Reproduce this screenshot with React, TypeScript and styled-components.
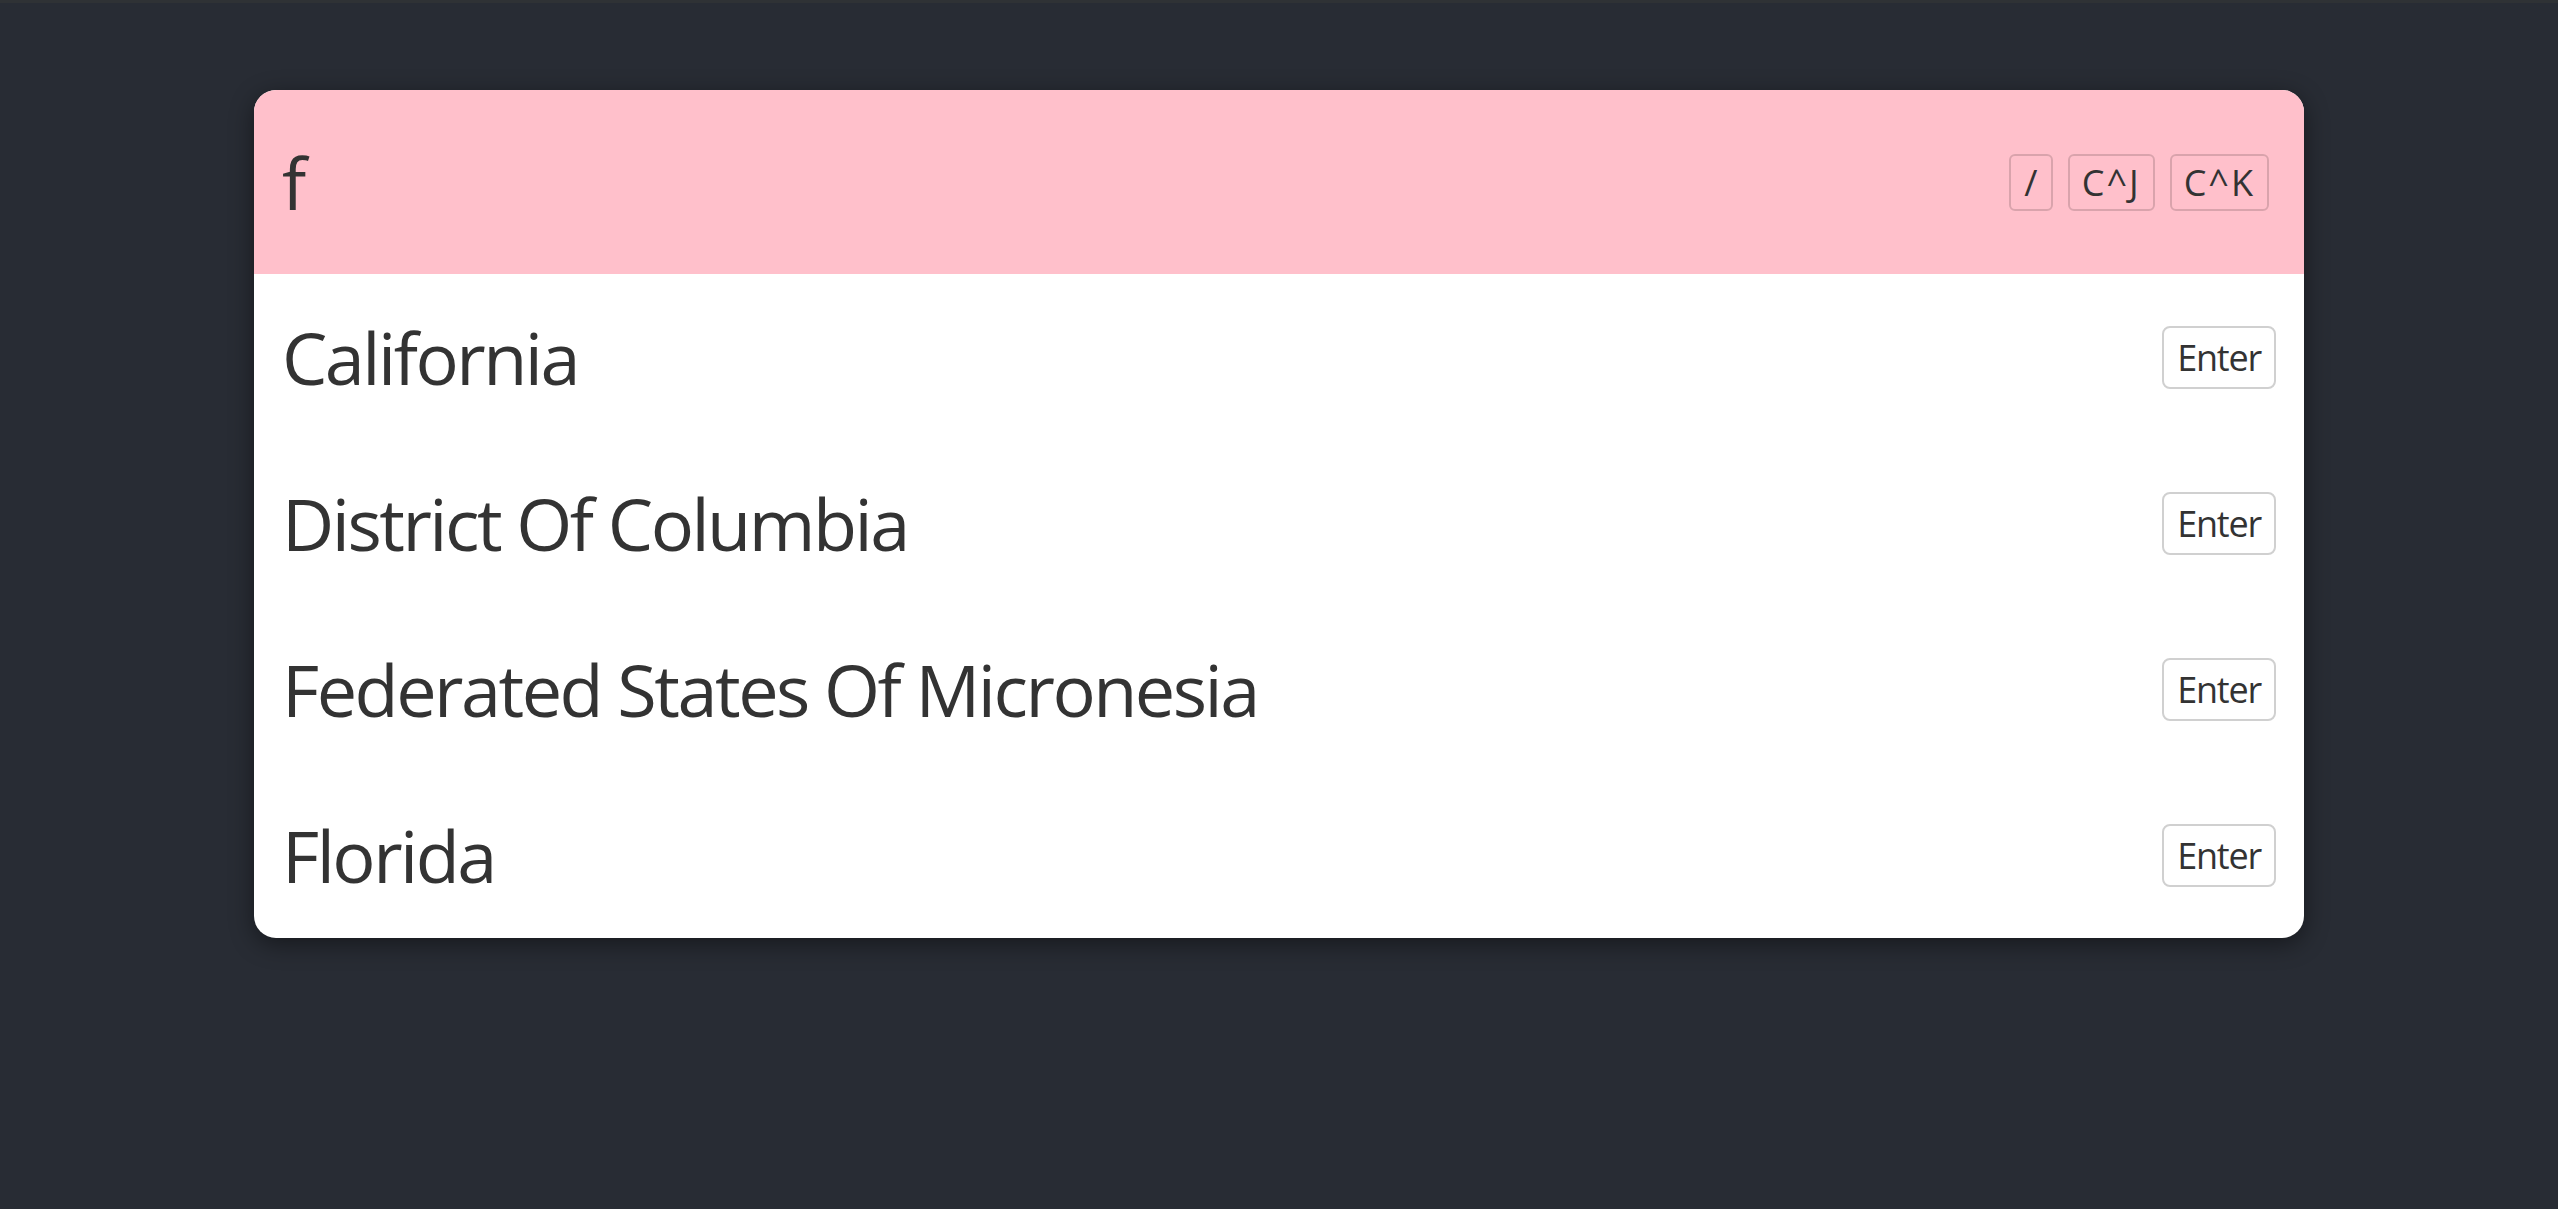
import React, { useState } from 'react';
import styled, { createGlobalStyle } from 'styled-components';

const GlobalStyle = createGlobalStyle`
  html, body {
    margin: 0;
    padding: 0;
    background: #282c34;
  }
  body {
    font-family: "Open Sans", "Noto Sans", sans-serif;
    color: #333;
  }
`;

const Page = styled.div`
  min-height: 1209px;
  box-sizing: border-box;
  border-top: 3px solid #2f3235;
  padding-top: 87px;
  display: flex;
  justify-content: center;
`;

const Palette = styled.div`
  width: 2050px;
  background: #fff;
  border-radius: 22px;
  overflow: hidden;
  box-shadow: 0 6px 24px rgba(0, 0, 0, 0.45);
  align-self: flex-start;
`;

const SearchBar = styled.div`
  height: 184px;
  background: pink;
  display: flex;
  align-items: center;
  padding: 0 35px 0 28px;
  gap: 15px;
`;

const SearchInput = styled.input`
  flex: 1;
  min-width: 0;
  border: none;
  outline: none;
  background: transparent;
  font-family: inherit;
  font-size: 72px;
  letter-spacing: -2.5px;
  color: #333;
  padding: 0;
`;

const Key = styled.kbd<{ $wide?: boolean }>`
  font-family: inherit;
  font-size: 36px;
  line-height: 53px;
  height: 57px;
  min-width: 44px;
  text-align: center;
  box-sizing: border-box;
  padding: 0 ${({ $wide }) => ($wide ? '12px' : '10px')};
  border: 2px solid rgba(0, 0, 0, 0.15);
  border-radius: 6px;
  letter-spacing: ${({ $wide }) => ($wide ? '2px' : '0')};
  color: #333;
`;

const ResultList = styled.ul`
  list-style: none;
  margin: 0;
  padding: 0;
`;

const ResultRow = styled.li`
  height: 166px;
  display: flex;
  align-items: center;
  justify-content: space-between;
  padding: 0 28px 0 28px;
`;

const ResultLabel = styled.span`
  font-size: 72px;
  letter-spacing: -2.5px;
  color: #333;
`;

const EnterKey = styled.kbd`
  font-family: inherit;
  font-size: 36px;
  letter-spacing: -1.2px;
  height: 63px;
  line-height: 59px;
  box-sizing: border-box;
  padding: 0 13px;
  border: 2px solid #d0d0d0;
  border-radius: 8px;
  background: #fff;
  color: #333;
`;

const results = [
  'California',
  'District Of Columbia',
  'Federated States Of Micronesia',
  'Florida',
];

export default function App() {
  const [query, setQuery] = useState('f');

  return (
    <>
      <GlobalStyle />
      <Page>
        <Palette>
          <SearchBar>
            <SearchInput value={query} onChange={(e) => setQuery(e.target.value)} />
            <Key>/</Key>
            <Key $wide>C^J</Key>
            <Key $wide>C^K</Key>
          </SearchBar>
          <ResultList>
            {results.map((name) => (
              <ResultRow key={name}>
                <ResultLabel>{name}</ResultLabel>
                <EnterKey>Enter</EnterKey>
              </ResultRow>
            ))}
          </ResultList>
        </Palette>
      </Page>
    </>
  );
}
